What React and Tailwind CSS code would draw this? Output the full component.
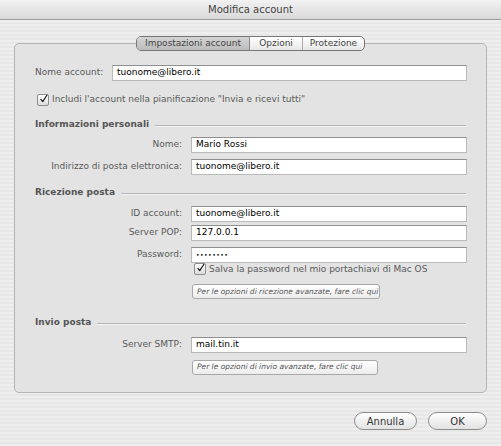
import React from 'react';

const font = { fontFamily: '"DejaVu Sans", "Liberation Sans", sans-serif' };

function Check() {
  return (
    <span className="w-[12px] h-[12px] border border-[#8e8e8e] rounded-[2px] bg-gradient-to-b from-white to-[#dcdcdc] flex items-center justify-center shrink-0">
      <svg width="12" height="12" viewBox="0 0 12 12" className="-mt-[2px] ml-[1px]">
        <path d="M2.5 6.5 L5 9.5 L10.5 1" fill="none" stroke="#1a1a1a" strokeWidth="1.6" strokeLinecap="round" strokeLinejoin="round" />
      </svg>
    </span>
  );
}

function Field({ value, className = '', size = 'text-[9px]' }) {
  return (
    <div className={`h-[16px] bg-white border border-[#b9b9b9] border-t-[#8f8f8f] flex items-center px-[4px] text-black ${size} ${className}`}>
      {value}
    </div>
  );
}

function Row({ label, value, mt, small }) {
  return (
    <div className={`flex items-center ${mt}`}>
      <div className="w-[176px] text-right pr-[9px] text-[9px] text-[#5a5a5a]">{label}</div>
      <Field
        value={value}
        className={`w-[276px] ${small ? 'tracking-[0.5px] text-[#333]' : ''}`}
        size={small ? 'text-[6px]' : 'text-[9px]'}
      />
    </div>
  );
}

function Header({ title, mt }) {
  return (
    <div className={`flex items-center ml-[20px] mr-[20px] ${mt}`}>
      <span className="text-[9px] font-bold text-[#555] pr-[6px]">{title}</span>
      <div className="flex-1 h-[2px] border-t border-[#b5b5b5] border-b border-b-[#f4f4f4] mt-[3px]" />
    </div>
  );
}

function SmallButton({ text, w }) {
  return (
    <div className={`ml-[177px] ${w} h-[15px] rounded-[3px] border border-[#a8a8a8] bg-gradient-to-b from-white to-[#ececec] flex items-center px-[4px] text-[7.5px] italic text-[#555] whitespace-nowrap overflow-hidden`}>
      {text}
    </div>
  );
}

export default function App() {
  return (
    <div
      style={font}
      className="w-[501px] h-[446px] overflow-hidden bg-[repeating-linear-gradient(180deg,#eeeeee_0px,#eeeeee_2px,#e7e7e7_2px,#e7e7e7_4px)] flex flex-col"
    >
      <div className="h-[20px] shrink-0 border-b border-[#9c9c9c] bg-gradient-to-b from-[#f2f2f2] to-[#d9d9d9] flex items-center justify-center text-[10px] text-[#444]">
        Modifica account
      </div>

      <div className="relative ml-[14px] mt-[23px] w-[473px] h-[350px] rounded-[5px] border border-[#b4b4b4] bg-[#e3e3e3]">
        <div className="absolute -top-[8px] left-[121px] w-[229px] h-[15px] flex rounded-[5px] border border-[#777] overflow-hidden text-[9px] text-[#444] bg-gradient-to-b from-white to-[#e8e8e8]">
          <div className="w-[113px] flex items-center justify-center bg-gradient-to-b from-[#d4d4d4] to-[#bcbcbc] border-r border-[#8a8a8a]">
            Impostazioni account
          </div>
          <div className="w-[53px] flex items-center justify-center border-r border-[#aaa]">Opzioni</div>
          <div className="flex-1 flex items-center justify-center">Protezione</div>
        </div>

        <div className="flex flex-col pt-[21px]">
          <div className="flex items-center">
            <div className="w-[97px] pl-[20px] text-[9px] text-[#5a5a5a]">Nome account:</div>
            <Field value="tuonome@libero.it" className="w-[355px]" />
          </div>

          <div className="flex items-center ml-[22px] mt-[12px] gap-[3px] text-[9px] text-[#5a5a5a]">
            <Check />
            <span>Includi l'account nella pianificazione "Invia e ricevi tutti"</span>
          </div>

          <Header title="Informazioni personali" mt="mt-[11px]" />
          <Row label="Nome:" value="Mario Rossi" mt="mt-[6px]" />
          <Row label="Indirizzo di posta elettronica:" value="tuonome@libero.it" mt="mt-[6px]" />

          <Header title="Ricezione posta" mt="mt-[11px]" />
          <Row label="ID account:" value="tuonome@libero.it" mt="mt-[6px]" />
          <Row label="Server POP:" value="127.0.0.1" mt="mt-[3px]" />
          <Row label="Password:" value="••••••••" mt="mt-[6px]" small />

          <div className="flex items-center ml-[179px] mt-0 gap-[3px] text-[9px] text-[#5a5a5a]">
            <Check />
            <span>Salva la password nel mio portachiavi di Mac OS</span>
          </div>
          <div className="mt-[8px]">
            <SmallButton text="Per le opzioni di ricezione avanzate, fare clic qui" w="w-[188px]" />
          </div>

          <Header title="Invio posta" mt="mt-[17px]" />
          <Row label="Server SMTP:" value="mail.tin.it" mt="mt-[7px]" />
          <div className="mt-[7px]">
            <SmallButton text="Per le opzioni di invio avanzate, fare clic qui" w="w-[186px]" />
          </div>
        </div>
      </div>

      <div className="flex justify-end gap-[11px] mt-[19px] mr-[14px]">
        <div className="w-[63px] h-[18px] rounded-full border border-[#8d8d8d] bg-gradient-to-b from-white to-[#e2e2e2] flex items-center justify-center text-[10px] text-[#333]">
          Annulla
        </div>
        <div className="w-[59px] h-[18px] rounded-full border border-[#8d8d8d] bg-gradient-to-b from-white to-[#e2e2e2] flex items-center justify-center text-[10px] text-[#333]">
          OK
        </div>
      </div>
    </div>
  );
}
